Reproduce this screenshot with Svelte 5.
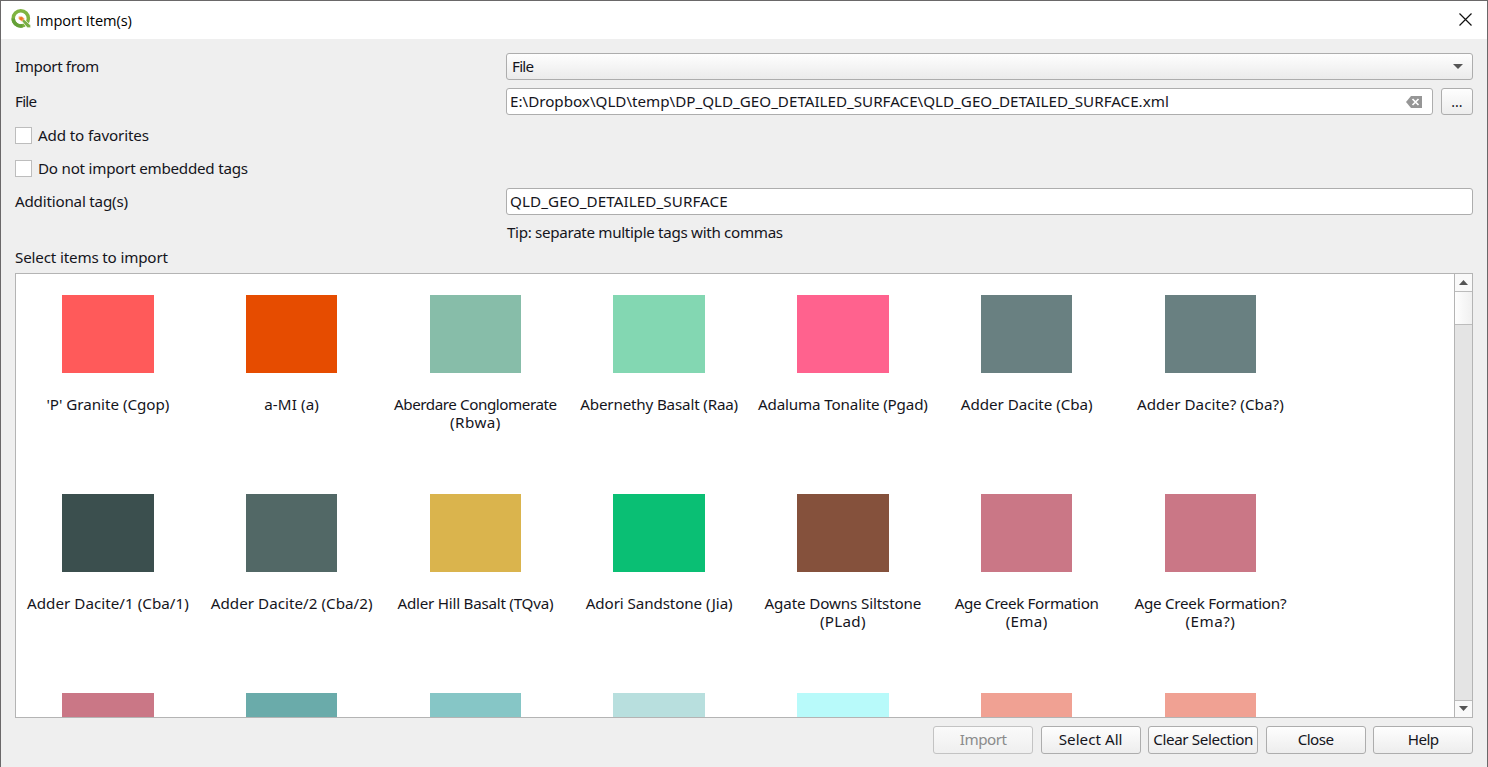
<script>
  const items = [
    { color: '#ff5a5a', lines: [["'P' Granite (Cgop)", 122]] },
    { color: '#e64c00', lines: [['a-MI (a)', 54]] },
    { color: '#87bda9', lines: [['Aberdare Conglomerate', 162], ['(Rbwa)', 50]] },
    { color: '#83d7b2', lines: [['Abernethy Basalt (Raa)', 157]] },
    { color: '#ff628e', lines: [['Adaluma Tonalite (Pgad)', 169]] },
    { color: '#698081', lines: [['Adder Dacite (Cba)', 131]] },
    { color: '#698081', lines: [['Adder Dacite? (Cba?)', 146]] },
    { color: '#3b4f4e', lines: [['Adder Dacite/1 (Cba/1)', 161]] },
    { color: '#526866', lines: [['Adder Dacite/2 (Cba/2)', 161]] },
    { color: '#dab44d', lines: [['Adler Hill Basalt (TQva)', 155]] },
    { color: '#0abf74', lines: [['Adori Sandstone (Jia)', 146]] },
    { color: '#85513c', lines: [['Agate Downs Siltstone', 156], ['(PLad)', 45]] },
    { color: '#ca7786', lines: [['Age Creek Formation', 143], ['(Ema)', 41]] },
    { color: '#ca7786', lines: [['Age Creek Formation?', 151], ['(Ema?)', 49]] },
    { color: '#ca7786', lines: [] },
    { color: '#6aabaa', lines: [] },
    { color: '#86c6c6', lines: [] },
    { color: '#b8dfde', lines: [] },
    { color: '#b8fafa', lines: [] },
    { color: '#f0a193', lines: [] },
    { color: '#f0a193', lines: [] }
  ];

  const buttons = [
    { label: 'Import', width: 46, disabled: true },
    { label: 'Select All', width: 63 },
    { label: 'Clear Selection', width: 99, wide: true },
    { label: 'Close', width: 35 },
    { label: 'Help', width: 30 }
  ];

  // Tracks the letters so that a label takes the given width.
  function fit(node, width) {
    const natural = node.getBoundingClientRect().width;
    const count = node.textContent.length;
    const spacing = (width + 0.8 - natural) / count;
    node.style.letterSpacing = `${spacing}px`;
  }
</script>

<div class="window">
  <header>
    <svg class="logo" width="21" height="21" viewBox="0 0 21 21">
      <circle cx="9.8" cy="9.4" r="7.6" fill="none" stroke="#80b440" stroke-width="3.5" />
      <path d="M2.2 9.4A7.6 7.6 0 0 0 11.5 16.8" fill="none" stroke="#64a038" stroke-width="3.5" />
      <path d="M10.5 11.8l2-2 7.2 6.5v2.5h-3.4z" fill="#79ad46" stroke="#fff" stroke-width="0.7" />
      <path d="M7.6 7.4h3.4l2.6 2.4-2.6 2.8-3.4-2.6z" fill="#f4a25c" />
      <circle cx="10.2" cy="9.6" r="1.6" fill="#ee7422" />
    </svg>
    <span class="title" use:fit={95}>Import Item(s)</span>
    <svg class="close" width="13" height="13" viewBox="0 0 13 13">
      <path d="M.5.5l12 12M12.5.5l-12 12" stroke="#111" stroke-width="1.2" />
    </svg>
  </header>

  <main>
    <div class="row source">
      <label for="source"><span use:fit={83}>Import from</span></label>
      <div class="combo" id="source">
        <span use:fit={20.5}>File</span>
        <svg width="10" height="5" viewBox="0 0 10 5"><path d="M0 0h10L5 5z" fill="#555" /></svg>
      </div>
    </div>

    <div class="row file">
      <label for="path"><span use:fit={20.5}>File</span></label>
      <div class="field path" id="path">
        <span use:fit={658}>E:\Dropbox\QLD\temp\DP_QLD_GEO_DETAILED_SURFACE\QLD_GEO_DETAILED_SURFACE.xml</span>
        <svg width="16" height="12" viewBox="0 0 16 12">
          <path d="M5 0h11v12H5L0 6z" fill="#969696" />
          <path d="M6.5 3l6 6M12.5 3l-6 6" stroke="#fff" stroke-width="1.7" />
        </svg>
      </div>
      <button class="browse"><span>...</span></button>
    </div>

    <div class="check favorites"><i></i><span use:fit={110}>Add to favorites</span></div>
    <div class="check embedded"><i></i><span use:fit={209}>Do not import embedded tags</span></div>

    <div class="row tags">
      <label for="tags"><span use:fit={112}>Additional tag(s)</span></label>
      <div class="field" id="tags"><span use:fit={217}>QLD_GEO_DETAILED_SURFACE</span></div>
    </div>
    <div class="tip"><span use:fit={275}>Tip: separate multiple tags with commas</span></div>
    <div class="heading"><span use:fit={152}>Select items to import</span></div>

    <section class="list">
      <div class="grid">
        {#each items as item}
          <div class="item">
            <div class="swatch" style:background={item.color}></div>
            {#each item.lines as [text, width]}
              <div class="line"><span use:fit={width}>{text}</span></div>
            {/each}
          </div>
        {/each}
      </div>
      <div class="scrollbar">
        <div class="arrow up"><svg width="9" height="5" viewBox="0 0 9 5"><path d="M0 5h9L4.5 0z" fill="#555" /></svg></div>
        <div class="thumb"></div>
        <div class="track"></div>
        <div class="arrow down"><svg width="9" height="5" viewBox="0 0 9 5"><path d="M0 0h9L4.5 5z" fill="#555" /></svg></div>
      </div>
    </section>

    <footer>
      {#each buttons as button}
        <button class:wide={button.wide} disabled={button.disabled}><span use:fit={button.width}>{button.label}</span></button>
      {/each}
    </footer>
  </main>
</div>

<style>
  :global(body) { margin: 0; overflow: hidden; }
  .window, .window * { box-sizing: border-box; }
  .window {
    width: 1488px;
    height: 767px;
    display: flex;
    flex-direction: column;
    background: #efefef;
    border: 1px solid #6a6869;
    border-bottom: 0;
    font: 15.2px/18px 'Noto Sans', sans-serif;
    color: #15151c;
    white-space: nowrap;
  }
  span { display: inline-block; }
  svg { display: block; flex: none; }
  header {
    height: 38px;
    flex: none;
    display: flex;
    align-items: center;
    padding: 0 15px 1px 10px;
    background: #fff;
    color: #000;
  }
  .title { margin-left: 4px; font: 14.6px/20px 'Open Sans', sans-serif; }
  .close { margin-left: auto; }
  main {
    flex: 1;
    min-height: 0;
    display: flex;
    flex-direction: column;
    padding: 14px 14px 0;
  }
  .row { display: flex; align-items: center; height: 27px; flex: none; }
  .row label { width: 491px; flex: none; padding-bottom: 2px; }
  .row .combo span, .row .field span { padding-bottom: 1px; }
  .file { margin-top: 8px; }
  .combo, .field {
    flex: 1;
    height: 27px;
    display: flex;
    align-items: center;
    justify-content: space-between;
    border: 1px solid #adadad;
    border-radius: 3px;
    background: #fff;
    padding: 0 9px 0 3px;
  }
  .path { padding-right: 10px; }
  .combo { background: linear-gradient(#fefefe, #ebebeb); padding-left: 5px; }
  button {
    height: 28px;
    padding: 0 0 2px;
    border: 1px solid #adadad;
    border-radius: 3px;
    background: linear-gradient(#fefefe, #ededed);
    font: inherit;
    color: inherit;
    display: flex;
    align-items: center;
    justify-content: center;
  }
  .browse { width: 32px; height: 27px; margin-left: 8px; padding: 0; font-size: 14px; }
  .check { display: flex; align-items: center; height: 18px; flex: none; }
  .check i { width: 17px; height: 17px; border: 1px solid #bdbdbd; background: #fff; margin-right: 6px; }
  .favorites { margin-top: 11px; }
  .embedded { margin-top: 15px; }
  .tags { margin-top: 11px; }
  .tip { height: 18px; margin: 8px 0 0 492px; }
  .heading { height: 18px; margin-top: 7px; }
  .list {
    height: 445px;
    flex: none;
    margin-top: 7px;
    display: flex;
    border: 1px solid #b4b4b4;
    background: #fff;
    overflow: hidden;
  }
  .grid {
    flex: 1;
    display: grid;
    grid-template-columns: repeat(7, 183.75px);
    grid-auto-rows: 199px;
    align-content: start;
  }
  .item { display: flex; flex-direction: column; align-items: center; padding-top: 21px; }
  .swatch { width: 91.5px; height: 78px; margin-bottom: 22px; flex: none; }
  .line { height: 17.5px; line-height: 18px; }
  .scrollbar {
    width: 18px;
    display: flex;
    flex-direction: column;
    border-left: 1px solid #b4b4b4;
    background: #e4e4e4;
  }
  .arrow { height: 17px; display: flex; align-items: center; justify-content: center; background: #f9f9f9; }
  .up { padding-bottom: 1px; }
  .thumb {
    height: 34px;
    border: solid #bcbcbc;
    border-width: 1px 0;
    background: linear-gradient(90deg, #fefefe, #f0f0f0);
  }
  .track { flex: 1; }
  .down { border-top: 1px solid #bcbcbc; padding-bottom: 2px; }
  footer { display: flex; justify-content: flex-end; gap: 7.7px; margin-top: 8px; }
  footer button { width: 99.8px; }
  footer button.wide { width: 109.8px; }
  footer button:disabled { color: #8b8b8b; border-color: #c3c3c3; background: linear-gradient(#fafafa, #efefef); }
</style>
